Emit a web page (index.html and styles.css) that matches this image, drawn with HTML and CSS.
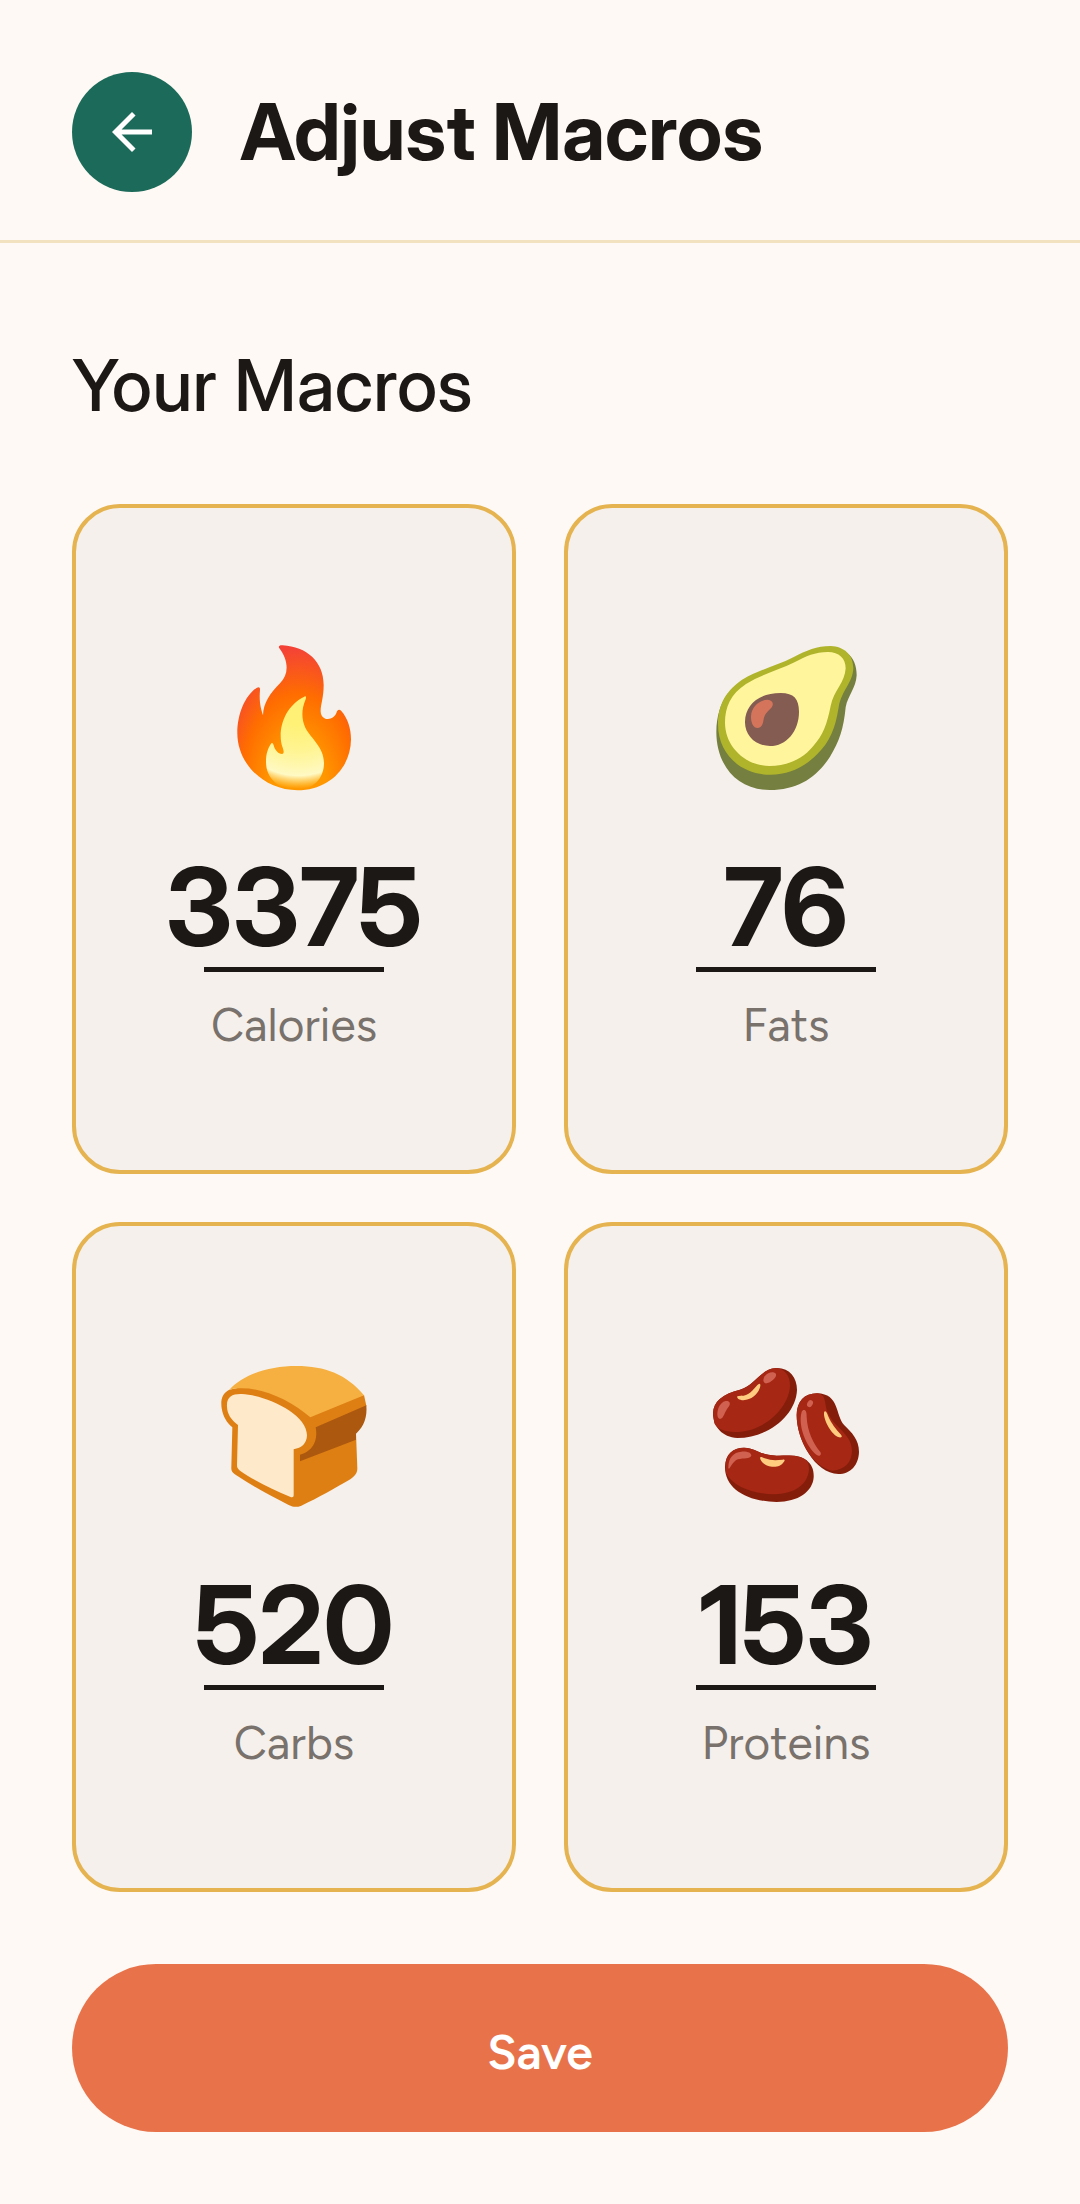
FILE: index.html
```html
<!DOCTYPE html>
<html lang="en">
<head>
    <meta charset="UTF-8">
    <meta name="viewport" content="width=device-width, initial-scale=1.0">
    <title>Adjust Macros</title>
    <link rel="stylesheet" href="styles.css">
</head>
<body>
    <header class="header">
        <button type="button" class="back-button" aria-label="Go back">
            <svg class="back-icon" viewBox="0 0 24 24" aria-hidden="true">
                <path d="M20 11H7.83l5.59-5.59L12 4l-8 8 8 8 1.41-1.41L7.83 13H20v-2z"/>
            </svg>
        </button>
        <h1>Adjust Macros</h1>
    </header>

    <main class="content">
        <h2>Your Macros</h2>
        <form id="macrosForm">
            <div class="macro-grid">
                <div class="card">
                    <svg class="macro-icon" viewBox="57 66 450 450" aria-hidden="true">
                        <defs>
                            <radialGradient id="flame" gradientUnits="userSpaceOnUse" cx="0" cy="0" r="1" gradientTransform="translate(295 512) scale(265 440)">
                                <stop offset=".31" stop-color="#ff9800"/>
                                <stop offset=".66" stop-color="#ff6d00"/>
                                <stop offset=".97" stop-color="#f44336"/>
                            </radialGradient>
                            <radialGradient id="flameCore" gradientUnits="userSpaceOnUse" cx="295" cy="260" r="262">
                                <stop offset=".21" stop-color="#fff176"/>
                                <stop offset=".49" stop-color="#fff490"/>
                                <stop offset=".67" stop-color="#fff7ad"/>
                                <stop offset=".79" stop-color="#fff9c4"/>
                                <stop offset=".86" stop-color="#fff6ab" stop-opacity=".53"/>
                                <stop offset=".94" stop-color="#fff176" stop-opacity="0"/>
                            </radialGradient>
                        </defs>
                        <path fill="url(#flame)" d="M237 83C235 78 240 75 248 76C320 80 371 125 371 195C371 235 361 255 362 275C364 304 401 304 410 277C412 269 418 267 424 273C443 295 453 325 453 358C452 445 385 511 293 511C190 510 112 430 112 340C112 280 136 226 171 203C177 199 181 203 180 210C177 245 182 265 189 286C190 250 210 220 240 190C267 163 267 122 237 83Z"/>
                        <path fill="url(#flameCore)" d="M313 230C318 227 319 231 317 238C303 270 305 300 316 323C335 358 371 380 372 428C372 475 340 509 290 509C235 509 198 475 198 425C198 400 204 385 213 371C216 367 219 370 221 376C224 390 235 402 246 402C254 400 251 390 247 380C232 335 250 260 313 230Z"/>
                    </svg>
                    <div class="macro-value">
                        <input type="text" inputmode="numeric" id="calories" name="calories" value="3375">
                    </div>
                    <label for="calories">Calories</label>
                </div>

                <div class="card">
                    <svg class="macro-icon" viewBox="63 66 450 450" aria-hidden="true">
                        <path fill="#757f3f" d="M470 98C491 113 500 137 500 166C498 205 474 225 467 262C461 325 448 365 420 410C380 472 325 510 239 510C140 510 79 435 79 335C79 290 92 250 114 220Z"/>
                        <path fill="#afb42b" d="M84 312C84 265 100 218 155 180C215 145 260 138 310 112C350 91 380 78 422 78C462 80 490 103 490 145C488 190 455 210 446 262C436 325 420 365 382 402C345 440 300 464 240 464C150 464 84 400 84 312Z"/>
                        <path fill="#fff59d" d="M105 308C105 262 122 222 168 192C215 163 262 152 315 126C348 109 375 96 414 96C447 97 467 114 467 145C465 188 431 212 422 258C411 312 400 345 368 380C337 417 292 438 238 438C160 436 105 375 105 308Z"/>
                        <path fill="#855c52" d="M165 305C166 255 205 219 272 219C312 219 327 237 327 275C327 335 288 378 240 378C195 378 164 345 165 305Z"/>
                        <path fill="#d4755b" d="M183 290C184 260 208 240 233 239C248 240 253 252 244 263C234 274 224 281 221 297C219 313 214 324 203 324C190 324 183 308 183 290Z"/>
                    </svg>
                    <div class="macro-value">
                        <input type="text" inputmode="numeric" id="fats" name="fats" value="76">
                    </div>
                    <label for="fats">Fats</label>
                </div>

                <div class="card">
                    <svg class="macro-icon" viewBox="57 45 450 450" aria-hidden="true">
                        <path fill="#de7f14" d="M88 134C64 146 62 168 65 190C69 215 80 233 97 247L94 366C93 380 99 384 109 391C160 425 215 453 266 480C280 487 291 487 304 482C355 459 407 428 451 403C465 393 472 384 472 370L468 265L499 182L492 150L331 200L200 110Z"/>
                        <path fill="#f5b041" d="M88 134C130 88 205 63 290 63C375 63 440 88 492 151L331 217C265 160 165 115 88 134Z"/>
                        <path fill="#ac580f" d="M347 247L499 181C502 215 493 245 468 266V284L300 349V329C336 320 355 290 347 247Z"/>
                        <path fill="#ffe9cb" d="M81 185C79 155 97 146 125 147C195 150 321 205 321 271C320 296 305 309 281 313V450C281 457 277 458 270 455C220 435 160 405 120 377C113 371 111 368 111 360L114 240C93 224 82 207 81 185Z"/>
                    </svg>
                    <div class="macro-value">
                        <input type="text" inputmode="numeric" id="carbs" name="carbs" value="520">
                    </div>
                    <label for="carbs">Carbs</label>
                </div>

                <div class="card">
                    <svg class="macro-icon" viewBox="63 45 450 450" aria-hidden="true">
                        <g fill="#851d0b">
                            <path d="M69 205C70 170 98 146 150 134C195 122 213 70 261 69C300 70 321 98 321 135C318 210 235 279 142 279C97 277 69 245 69 205Z"/>
                            <path d="M320 210C320 170 343 145 381 145C450 147 435 210 463 241C485 262 507 285 507 320C506 360 482 387 445 387C375 385 320 285 320 210Z"/>
                            <path d="M105 365C106 328 128 308 162 308C200 309 210 332 260 332C305 331 325 328 350 346C366 360 372 375 371 397C368 440 325 471 260 471C170 469 104 430 105 365Z"/>
                        </g>
                        <g fill="#a52714">
                            <path d="M69 205C70 170 98 146 150 134C195 122 213 70 258 69C285 71 301 93 300 124C296 190 222 263 132 261C105 260 83 254 73 235Z"/>
                            <path d="M320 210C320 170 343 145 381 145C412 148 401 177 414 204C433 250 486 265 486 318C485 352 465 374 427 377C365 365 320 280 320 210Z"/>
                            <path d="M106 362C108 328 128 308 162 308C200 309 210 332 260 332C305 331 326 331 344 342C353 348 357 359 357 373C354 418 315 447 252 448C185 446 130 425 108 385Z"/>
                        </g>
                        <g fill="#d06050">
                            <path d="M107 168C118 166 123 174 117 184C102 202 102 221 90 222C81 221 80 205 85 190C90 178 97 170 107 168Z"/>
                            <path d="M224 94C234 80 253 78 258 87C262 98 237 117 226 115C218 111 219 103 224 94Z"/>
                            <ellipse cx="360" cy="176" rx="8" ry="11" transform="rotate(30 360 176)"/>
                            <path d="M342 195C348 195 350 202 350 215C352 260 370 295 391 321C396 329 389 336 380 330C348 304 323 241 335 200C337 197 339 195 342 195Z"/>
                            <path d="M115 366C116 338 130 322 154 320C174 319 184 324 184 332C180 342 161 338 144 343C128 348 120 372 117 371C115 371 115 369 115 366Z"/>
                        </g>
                        <g fill="#ffcc80">
                            <path d="M208 116C213 117 211 124 209 130C202 150 184 164 160 166C148 166 139 159 142 154C147 151 158 154 168 150C190 141 197 120 208 116Z"/>
                            <path d="M404 199C409 197 411 205 414 212C425 237 437 251 453 269C458 275 455 278 447 277C425 270 400 225 402 203Z"/>
                            <path d="M210 338C212 334 217 338 224 340C243 347 259 346 278 344C285 343 285 347 282 350C273 363 262 366 246 365C228 364 212 352 210 338Z"/>
                        </g>
                    </svg>
                    <div class="macro-value">
                        <input type="text" inputmode="numeric" id="proteins" name="proteins" value="153">
                    </div>
                    <label for="proteins">Proteins</label>
                </div>
            </div>

            <button type="submit" class="save-button">Save</button>
        </form>
    </main>
</body>
</html>
```
FILE: styles.css
```css
:root {
    --primary: #e8734a;
    --green: #1c6b5a;
    --gold: #e5b350;
    --gold-light: #f3e2bf;
    --background: #fff9f5;
    --card: #f5f0eb;
    --text: #1c1816;
    --text-light: #78716c;
}

* {
    margin: 0;
    padding: 0;
    box-sizing: border-box;
}

body {
    background-color: var(--background);
    color: var(--text);
    font-family: "Inter Display", "Inter Tight", Inter, sans-serif;
    min-height: 100vh;
}

.header {
    display: flex;
    align-items: center;
    gap: 48px;
    padding: 72px 72px 48px;
    border-bottom: 3px solid var(--gold-light);
}

.back-button {
    display: flex;
    align-items: center;
    justify-content: center;
    width: 120px;
    height: 120px;
    border: none;
    border-radius: 50%;
    background-color: var(--green);
    cursor: pointer;
}

.back-icon {
    width: 60px;
    height: 60px;
    fill: #ffffff;
}

h1 {
    font-size: 78px;
    font-weight: 700;
    line-height: 96px;
}

.content {
    padding: 96px 72px 72px;
}

h2 {
    font-size: 72px;
    font-weight: 500;
    line-height: 92px;
    margin-bottom: 73px;
}

.macro-grid {
    display: grid;
    grid-template-columns: 1fr 1fr;
    gap: 48px;
}

.card {
    display: flex;
    flex-direction: column;
    align-items: center;
    padding: 134px 24px 116px;
    background-color: var(--card);
    border: 4px solid var(--gold);
    border-radius: 48px;
}

.macro-icon {
    width: 150px;
    height: 150px;
    margin-bottom: 50px;
}

.macro-value {
    position: relative;
    width: 100%;
    margin-bottom: 24px;
}

.macro-value input {
    display: block;
    width: 100%;
    height: 130px;
    border: none;
    outline: none;
    background: transparent;
    color: var(--text);
    font-family: inherit;
    font-size: 108px;
    font-weight: 700;
    line-height: 130px;
    text-align: center;
}

/* underline stays the same width whatever the value is */
.macro-value::after {
    content: "";
    position: absolute;
    left: 50%;
    bottom: 0;
    width: 180px;
    height: 5px;
    margin-left: -90px;
    background-color: var(--text);
}

.card label {
    color: var(--text-light);
    font-family: Figtree, Lato, sans-serif;
    font-size: 46px;
    line-height: 58px;
}

.save-button {
    display: block;
    width: 100%;
    height: 168px;
    margin-top: 72px;
    padding-top: 8px;
    border: none;
    border-radius: 84px;
    background-color: var(--primary);
    color: #ffffff;
    font-family: Figtree, Lato, sans-serif;
    font-size: 48px;
    font-weight: 600;
    cursor: pointer;
}
```
